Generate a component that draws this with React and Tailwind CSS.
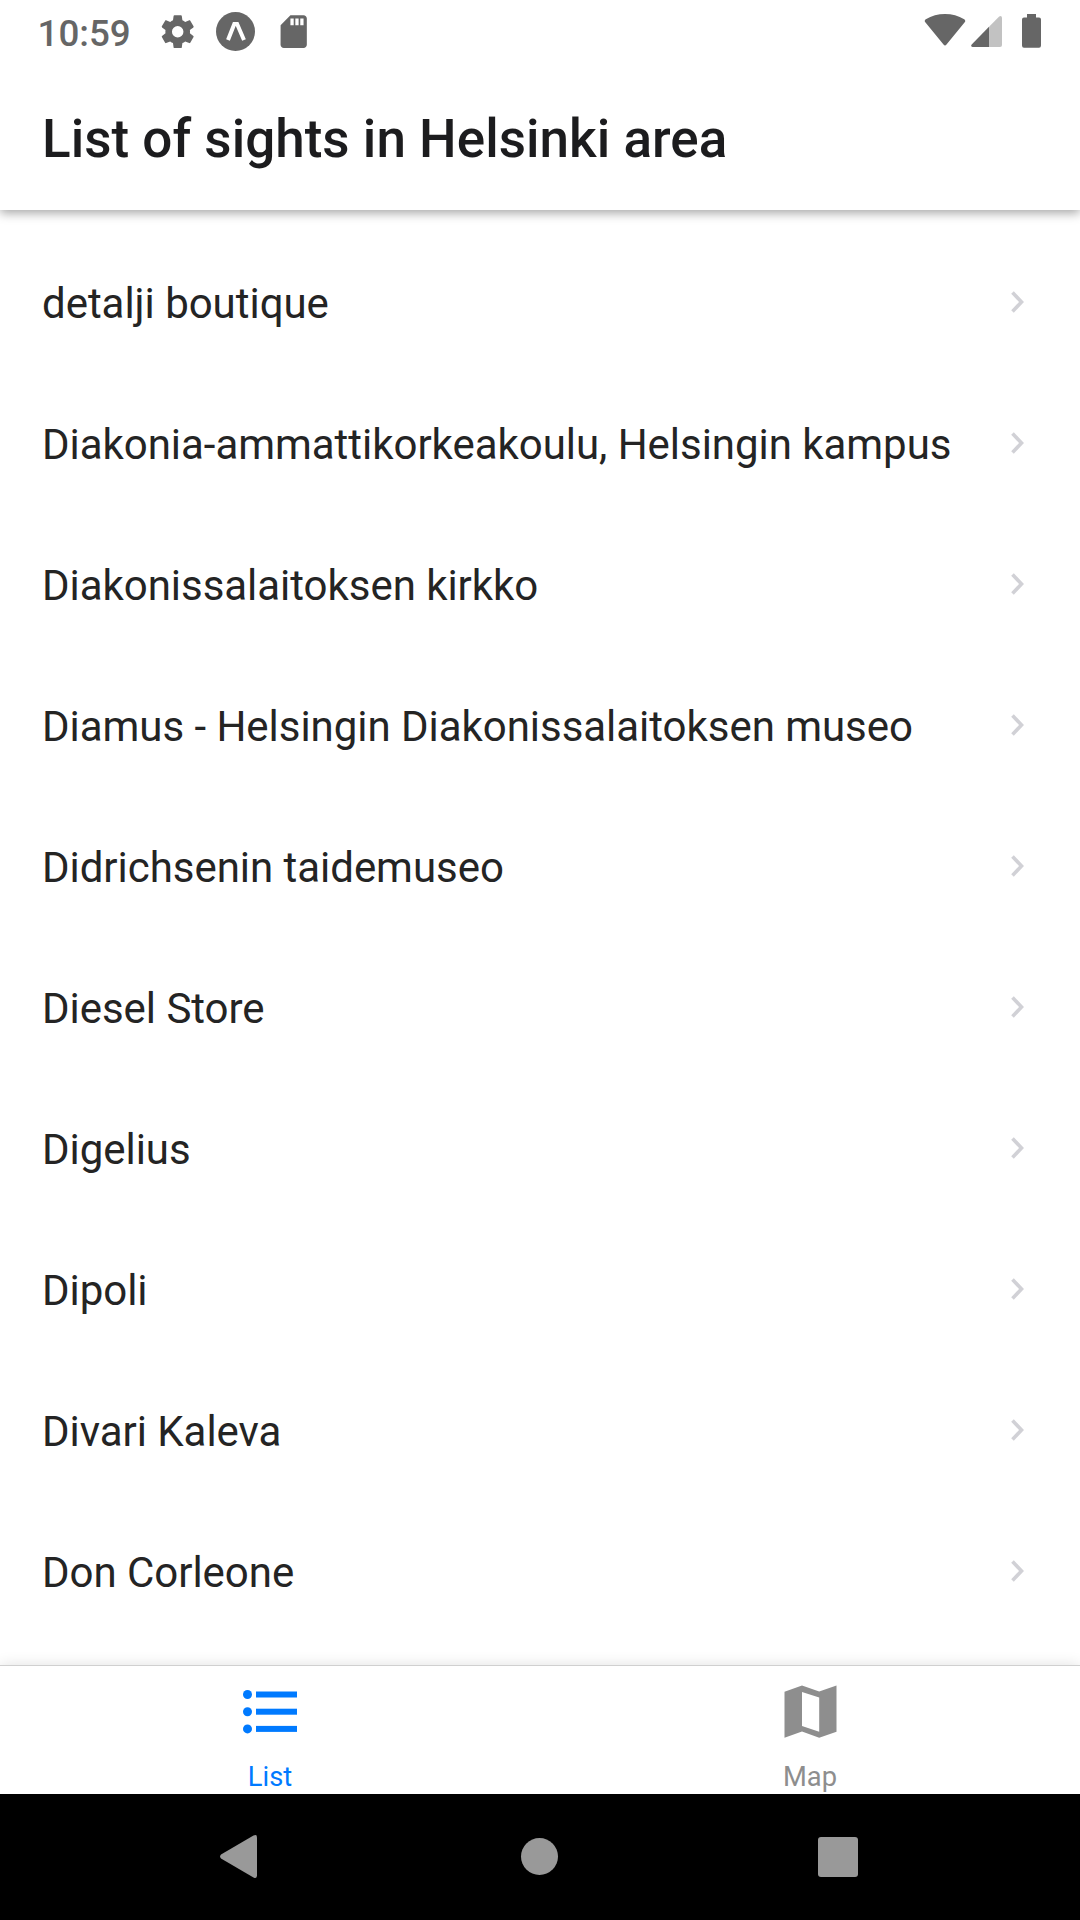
const sights = [
  "detalji boutique",
  "Diakonia-ammattikorkeakoulu, Helsingin kampus",
  "Diakonissalaitoksen kirkko",
  "Diamus - Helsingin Diakonissalaitoksen museo",
  "Didrichsenin taidemuseo",
  "Diesel Store",
  "Digelius",
  "Dipoli",
  "Divari Kaleva",
  "Don Corleone",
];

function StatusBar() {
  return (
    <div className="flex h-[63px] shrink-0 items-start pt-3 pl-[37.5px] pr-[39px] text-[#666666]">
      <span className="mt-[2px] w-[120.5px] text-[36.75px] leading-[40px] font-medium">10:59</span>
      <svg className="size-[39.4px]" viewBox="0 0 24 24" fill="currentColor">
        <path d="M19.43 12.98c.04-.32.07-.64.07-.98s-.03-.66-.07-.98l2.11-1.65c.19-.15.24-.42.12-.64l-2-3.46c-.12-.22-.39-.3-.61-.22l-2.49 1c-.52-.4-1.08-.73-1.69-.98l-.38-2.65A.49.49 0 0 0 14 2h-4c-.25 0-.46.18-.49.42l-.38 2.65c-.61.25-1.17.59-1.69.98l-2.49-1c-.23-.09-.49 0-.61.22l-2 3.46c-.13.22-.07.49.12.64l2.11 1.65c-.04.32-.07.65-.07.98s.03.66.07.98l-2.11 1.65c-.19.15-.24.42-.12.64l2 3.46c.12.22.39.3.61.22l2.49-1c.52.4 1.08.73 1.69.98l.38 2.65c.03.24.24.42.49.42h4c.25 0 .46-.18.49-.42l.38-2.65c.61-.25 1.17-.59 1.69-.98l2.49 1c.23.09.49 0 .61-.22l2-3.46c.12-.22.07-.49-.12-.64l-2.11-1.65zM12 15.5a3.5 3.5 0 1 1 0-7 3.5 3.5 0 0 1 0 7z" />
      </svg>
      <svg className="ml-[18.6px] size-[39px]" viewBox="0 0 39 39">
        <circle cx="19.5" cy="19.5" r="19.5" fill="currentColor" />
        <path d="M12 28 18.300 12h2.800L28 28" fill="none" stroke="#fff" strokeWidth="4" />
      </svg>
      <svg className="ml-[19.3px] size-[39.4px]" viewBox="0 0 24 24" fill="currentColor">
        <path d="M18 2h-8L4.02 8 4 20c0 1.100.9 2 2 2h12c1.100 0 2-.9 2-2V4c0-1.100-.9-2-2-2zm-6 6h-2V4h2v4zm3 0h-2V4h2v4zm3 0h-2V4h2v4z" />
      </svg>
      <div className="ml-auto flex items-start">
        <svg className="h-[36px] w-[42px]" viewBox="0 0 42 36" fill="currentColor">
          <path d="M1.500 10.500Q-.2 8.700 1.800 7.300Q10.500 2 21 2T40.200 7.300Q42.200 8.700 40.500 10.500L22.500 32.500Q21 34.500 19.500 32.500Z" />
        </svg>
        <svg className="ml-[5px] h-[36px] w-[31px]" viewBox="0 0 31 36" fill="currentColor">
          <path d="M18 14.800V35H1.500Q-.8 34.500.7 32.500Z" />
          <path d="M18 14.800 28.200 4.600Q30.500 3 31 5.500V33Q31 35 29 35H18Z" fill="#c2c2c2" />
        </svg>
        <svg className="ml-5 h-[36px] w-[19px]" viewBox="0 0 19 36" fill="currentColor">
          <path d="M5 2h9v3.500h3Q19 5.500 19 7.500V33.500Q19 35.800 17 35.800H2Q0 35.800 0 33.500V7.500Q0 5.500 2 5.500H5Z" />
        </svg>
      </div>
    </div>
  );
}

function SightRow({ name }) {
  return (
    <li className="flex h-[141px] shrink-0 items-center justify-between pl-[42px] pr-[56px]">
      <span className="text-[42px] leading-[49px] tracking-[-0.035px] whitespace-nowrap text-[#242424]">{name}</span>
      <svg className="mb-[4px] h-[22px] w-[13px]" viewBox="0 0 13 22" fill="none" stroke="#d1d1d6" strokeWidth="3.6">
        <path d="m1.500 1.500 9 9.500-9 9.500" />
      </svg>
    </li>
  );
}

function TabBar() {
  return (
    <nav className="z-10 flex h-[129px] shrink-0 border-t border-[#d0d0d0] bg-white shadow-[0_0_14px_rgba(0,0,0,0.12)]">
      <div className="flex flex-1 flex-col items-center pt-[19px] text-[#007aff]">
        <svg className="h-[54px] w-[54px]" viewBox="0 0 54 54" fill="currentColor">
          {[9.5, 26.7, 43.9].map((y) => (
            <g key={y}>
              <circle cx="4.500" cy={y} r="4.500" />
              <rect x="13" y={y - 3} width="41" height="6" />
            </g>
          ))}
        </svg>
        <span className="mt-[22px] text-[27.3px] leading-[32px]">List</span>
      </div>
      <div className="flex flex-1 flex-col items-center pt-[19px] text-[#8e8e8e]">
        <svg className="h-[54px] w-[53px]" viewBox="0 0 53 54" fill="currentColor">
          <path fillRule="evenodd" d="M.5 6.800 18 .6 35.200 6.600 52.500.6V46.800L35.200 52.800 18 46.600.5 52.800ZM18 7v34l17.200 5.700V12.500Z" />
        </svg>
        <span className="mt-[22px] text-[27.3px] leading-[32px]">Map</span>
      </div>
    </nav>
  );
}

function NavigationBar() {
  return (
    <div className="z-10 flex h-[126px] shrink-0 items-center bg-black pl-[220px] pr-[222px] text-[#999999]">
      <svg className="mb-px h-[43px] w-[37px]" viewBox="0 0 37 43" fill="currentColor">
        <path d="M33.500.6Q37-1.200 37 2.500V40.500Q37 44.200 33.500 42.400L1 23.500Q-.8 21.500 1 19.500Z" />
      </svg>
      <div className="mb-px ml-[264px] size-[37px] rounded-full bg-[#999999]" />
      <div className="ml-auto size-10 rounded-[3px] bg-[#999999]" />
    </div>
  );
}

export default function App() {
  return (
    <div className="flex h-[1920px] w-[1080px] flex-col overflow-hidden bg-white font-['Roboto',sans-serif]">
      <header className="z-10 flex h-[210px] shrink-0 flex-col bg-white shadow-[0_3px_10px_rgba(0,0,0,0.36)]">
        <StatusBar />
        <h1 className="mt-[45px] pl-[42px] text-[53px] leading-[62px] font-medium tracking-[0.02px] whitespace-nowrap text-[#1c1c1e]">
          List of sights in Helsinki area
        </h1>
      </header>
      <ul className="flex min-h-0 flex-1 flex-col overflow-hidden pt-[23px]">
        {sights.map((name) => (
          <SightRow key={name} name={name} />
        ))}
      </ul>
      <TabBar />
      <NavigationBar />
    </div>
  );
}
